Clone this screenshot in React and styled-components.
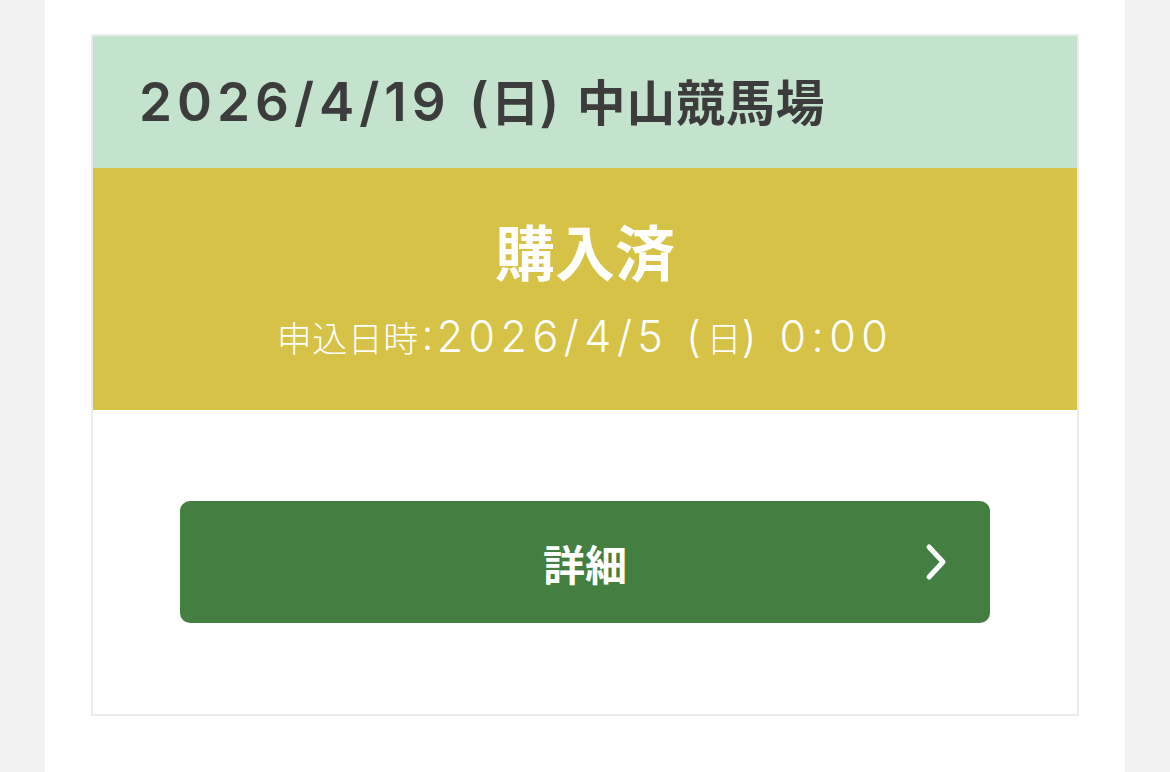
import React from "react";
import styled, { createGlobalStyle } from "styled-components";

const Global = createGlobalStyle`
  html, body { margin: 0; padding: 0; background: #f2f2f2; }
  body { font-family: "Inter", "Noto Sans CJK JP", sans-serif; }
`;

const Page = styled.div`
  width: 1170px;
  height: 772px;
  display: flex;
  justify-content: center;
  background: #f2f2f2;
`;

const Sheet = styled.main`
  width: 1080px;
  background: #ffffff;
  padding: 34px 46px 0;
  box-sizing: border-box;
`;

const Card = styled.section`
  border: 2px solid #ececec;
  display: flex;
  flex-direction: column;
`;

const Header = styled.div`
  background: #c4e3cc;
  height: 132px;
  display: flex;
  align-items: center;
  padding: 0 46px 6px;
  box-sizing: border-box;
`;

const HeaderTitle = styled.h2`
  margin: 0;
  font-family: "Inter", "Noto Sans CJK JP", sans-serif;
  font-size: 53px;
  font-weight: 600;
  color: #3c3c3c;
  letter-spacing: 5px;
  white-space: nowrap;
`;

const Weekday = styled.span`
  letter-spacing: 2px;
`;

const Kanji = styled.span`
  font-family: "Noto Sans CJK JP", sans-serif;
  font-size: ${(p) => p.$size || "0.92em"};
  font-weight: ${(p) => p.$weight || "inherit"};
  letter-spacing: ${(p) => p.$spacing || "0"};
  font-feature-settings: ${(p) => (p.$palt ? '"palt"' : "normal")};
`;

const Status = styled.div`
  background: #d6c247;
  height: 242px;
  display: flex;
  flex-direction: column;
  align-items: center;
  justify-content: center;
  gap: 28px;
  color: #ffffff;
  padding-top: 2px;
  box-sizing: border-box;
`;

const StatusLabel = styled.div`
  font-family: "Noto Sans CJK JP", sans-serif;
  font-size: 60px;
  font-weight: 700;
  line-height: 1.1;
`;

const StatusDate = styled.div`
  font-family: "Inter", "Noto Sans CJK JP", sans-serif;
  font-size: 43px;
  font-weight: 300;
  line-height: 1.2;
  letter-spacing: 5.5px;
  white-space: nowrap;
`;

const Body = styled.div`
  height: 304px;
  display: flex;
  align-items: center;
  justify-content: center;
  padding: 0 87px;
`;

const DetailButton = styled.button`
  position: relative;
  width: 810px;
  height: 122px;
  border: none;
  border-radius: 10px;
  background: #427f41;
  color: #ffffff;
  font-family: "Noto Sans CJK JP", sans-serif;
  font-size: 42px;
  font-weight: 700;
  display: flex;
  align-items: center;
  justify-content: center;
  cursor: pointer;
`;

const Chevron = styled.svg`
  position: absolute;
  right: 42px;
  top: 50%;
  transform: translateY(-50%);
`;

export default function App() {
  return (
    <>
      <Global />
      <Page>
        <Sheet>
          <Card>
            <Header>
              <HeaderTitle>
                2026/4/19 <Weekday>(<Kanji>日</Kanji>) </Weekday>
                <Kanji $spacing="1px">中山競馬場</Kanji>
              </HeaderTitle>
            </Header>
            <Status>
              <StatusLabel>購入済</StatusLabel>
              <StatusDate>
                <Kanji $size="35px" $weight="300" $spacing="0.5px" $palt>申込日時：</Kanji>
                2026/4/5 (<Kanji $size="35px" $weight="300">日</Kanji>) 0:00
              </StatusDate>
            </Status>
            <Body>
              <DetailButton>
                詳細
                <Chevron width="24" height="40" viewBox="0 0 24 40" fill="none">
                  <path d="M5 5 L19 20 L5 35" stroke="#fff" strokeWidth="5" strokeLinecap="round" strokeLinejoin="round" />
                </Chevron>
              </DetailButton>
            </Body>
          </Card>
        </Sheet>
      </Page>
    </>
  );
}
